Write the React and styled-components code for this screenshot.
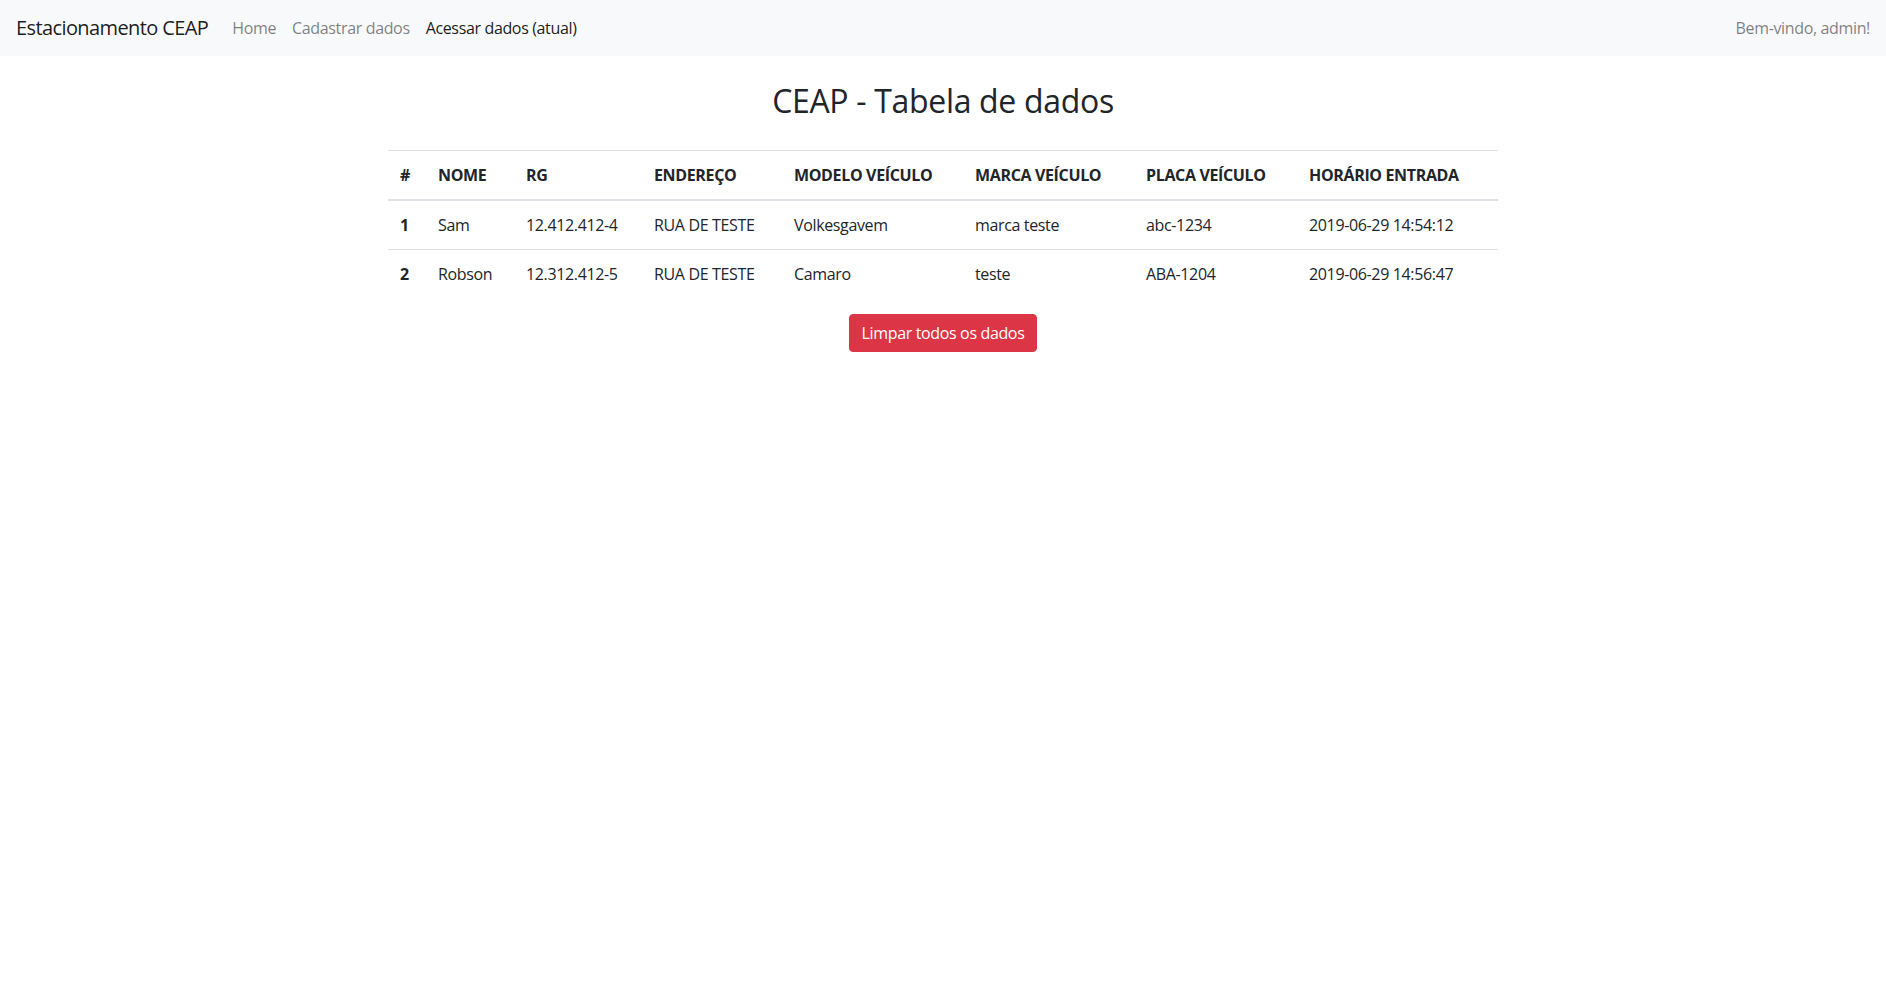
import React from "react";
import styled, { createGlobalStyle } from "styled-components";

const GlobalStyle = createGlobalStyle`
  * {
    box-sizing: border-box;
  }
  body {
    margin: 0;
    font-family: "Segoe UI", "Open Sans", "Noto Sans", sans-serif;
    font-size: 16px;
    line-height: 1.5;
    letter-spacing: -0.022em;
    color: #212529;
    background: #ffffff;
  }
`;

const Navbar = styled.nav`
  display: flex;
  align-items: center;
  justify-content: space-between;
  padding: 8px 16px;
  background: #f8f9fa;
`;

const NavLeft = styled.div`
  display: flex;
  align-items: center;
`;

const Brand = styled.a`
  font-size: 20px;
  line-height: 30px;
  padding: 5px 0;
  margin-right: 16px;
  letter-spacing: -0.03em;
  color: rgba(0, 0, 0, 0.9);
  text-decoration: none;
`;

const NavLink = styled.a`
  padding: 8px;
  line-height: 24px;
  color: ${(p) => (p.$active ? "rgba(0, 0, 0, 0.9)" : "rgba(0, 0, 0, 0.5)")};
  text-decoration: none;
  cursor: pointer;
`;

const NavText = styled.span`
  padding: 8px 0;
  line-height: 24px;
  color: rgba(0, 0, 0, 0.5);
`;

const Container = styled.main`
  width: 1140px;
  margin: 0 auto;
  padding: 26px 15px 0;
  display: flex;
  flex-direction: column;
  align-items: center;
`;

const Title = styled.h2`
  margin: 0 0 30px;
  font-size: 32px;
  font-weight: 500;
  line-height: 1.2;
  letter-spacing: -0.01em;
`;

const Table = styled.table`
  width: 100%;
  border-collapse: collapse;
  margin-bottom: 16px;
  table-layout: fixed;
`;

const HeadCell = styled.th`
  padding: 12px;
  text-align: left;
  font-weight: 700;
  vertical-align: bottom;
  border-top: 1px solid #dee2e6;
  border-bottom: 2px solid #dee2e6;
  white-space: nowrap;
`;

const RowHead = styled.th`
  padding: 12px;
  text-align: left;
  font-weight: 700;
  border-top: 1px solid #dee2e6;
`;

const Cell = styled.td`
  padding: 12px;
  border-top: 1px solid #dee2e6;
  white-space: nowrap;
`;

const DangerButton = styled.button`
  font-family: inherit;
  font-size: 16px;
  line-height: 24px;
  letter-spacing: inherit;
  padding: 6px 12px;
  color: #ffffff;
  background: #dc3545;
  border: 1px solid #dc3545;
  border-radius: 4px;
  cursor: pointer;
`;

const columns = [
  { label: "#", width: 38 },
  { label: "NOME", width: 88 },
  { label: "RG", width: 128 },
  { label: "ENDEREÇO", width: 140 },
  { label: "MODELO VEÍCULO", width: 181 },
  { label: "MARCA VEÍCULO", width: 171 },
  { label: "PLACA VEÍCULO", width: 163 },
  { label: "HORÁRIO ENTRADA", width: 201 },
];

const rows = [
  {
    id: 1,
    nome: "Sam",
    rg: "12.412.412-4",
    endereco: "RUA DE TESTE",
    modelo: "Volkesgavem",
    marca: "marca teste",
    placa: "abc-1234",
    entrada: "2019-06-29 14:54:12",
  },
  {
    id: 2,
    nome: "Robson",
    rg: "12.312.412-5",
    endereco: "RUA DE TESTE",
    modelo: "Camaro",
    marca: "teste",
    placa: "ABA-1204",
    entrada: "2019-06-29 14:56:47",
  },
];

export default function App() {
  return (
    <>
      <GlobalStyle />
      <Navbar>
        <NavLeft>
          <Brand href="#">Estacionamento CEAP</Brand>
          <NavLink>Home</NavLink>
          <NavLink>Cadastrar dados</NavLink>
          <NavLink $active>Acessar dados (atual)</NavLink>
        </NavLeft>
        <NavText>Bem-vindo, admin!</NavText>
      </Navbar>
      <Container>
        <Title>CEAP - Tabela de dados</Title>
        <Table>
          <colgroup>
            {columns.map((c) => (
              <col key={c.label} style={{ width: c.width }} />
            ))}
          </colgroup>
          <thead>
            <tr>
              {columns.map((c) => (
                <HeadCell key={c.label}>{c.label}</HeadCell>
              ))}
            </tr>
          </thead>
          <tbody>
            {rows.map((r) => (
              <tr key={r.id}>
                <RowHead>{r.id}</RowHead>
                <Cell>{r.nome}</Cell>
                <Cell>{r.rg}</Cell>
                <Cell>{r.endereco}</Cell>
                <Cell>{r.modelo}</Cell>
                <Cell>{r.marca}</Cell>
                <Cell>{r.placa}</Cell>
                <Cell>{r.entrada}</Cell>
              </tr>
            ))}
          </tbody>
        </Table>
        <DangerButton>Limpar todos os dados</DangerButton>
      </Container>
    </>
  );
}
